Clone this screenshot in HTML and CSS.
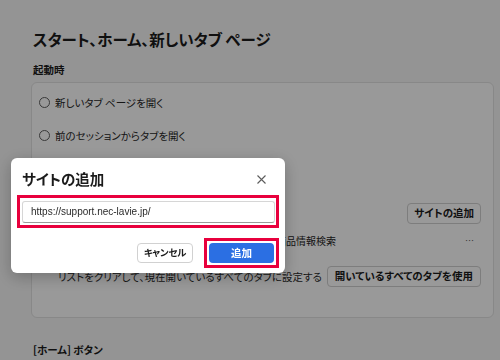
FILE: index.html
```html
<!DOCTYPE html>
<html lang="ja">
<head>
  <meta charset="UTF-8">
  <meta name="viewport" content="width=device-width, initial-scale=1">
  <title>設定 - スタート、ホーム、新しいタブ ページ</title>
  <link rel="stylesheet" href="styles.css">
</head>
<body>
  <main class="page">
    <h1>スタート、ホーム、新しいタブ ページ</h1>
    <h3 class="label">起動時</h3>

    <section class="card">
      <label class="radio-row"><span class="radio"></span>新しいタブ ページを開く</label>
      <label class="radio-row"><span class="radio"></span>前のセッションからタブを開く</label>
      <label class="radio-row"><span class="radio checked"></span></label>

      <div class="pages-head">
        <button class="btn">サイトの追加</button>
      </div>
      <div class="site-row">
        <span class="site-name">商品情報検索</span>
        <span class="more">…</span>
      </div>
      <div class="use-row">
        <span>リストをクリアして、現在開いているすべてのタブに設定する</span>
        <button class="btn">開いているすべてのタブを使用</button>
      </div>
    </section>

    <h3 class="label home">[ホーム] ボタン</h3>
  </main>

  <div class="overlay">
    <div class="dialog">
      <div class="dialog-head">
        <h2>サイトの追加</h2>
        <svg class="close" width="9" height="9" viewBox="0 0 9 9">
          <path d="M0.5 0.5 L8.5 8.5 M8.5 0.5 L0.5 8.5" stroke="#5c5c5c" stroke-width="1.1" fill="none"/>
        </svg>
      </div>
      <div class="mark mark-input">
        <div class="input">https://support.nec-lavie.jp/</div>
      </div>
      <div class="dialog-foot">
        <button class="btn cancel">キャンセル</button>
        <div class="mark">
          <button class="btn primary">追加</button>
        </div>
      </div>
    </div>
  </div>
</body>
</html>
```

FILE: styles.css
```css
body {
  margin: 0;
  background-color: #f7f7f7;
  font-family: "Noto Sans CJK JP", sans-serif;
  font-feature-settings: "palt";
  color: #1b1b1b;
  width: 500px;
  height: 360px;
  overflow: hidden;
}
.page {
  padding: 0 6px 0 31px;
}
h1 {
  margin: 27px 0 0 2px;
  font-size: 15.5px;
  line-height: 24px;
  font-weight: 700;
}
.label {
  margin: 11px 0 0 2px;
  font-size: 10.5px;
  line-height: 16px;
  font-weight: 700;
}
.card {
  margin-top: 4px;
  background-color: #fff;
  border: 1px solid #e3e3e3;
  border-radius: 6px;
  padding: 3px 12px 30px 7px;
}
.radio-row {
  display: flex;
  align-items: center;
  gap: 5px;
  height: 33px;
  font-size: 10.5px;
  color: #262626;
}
.radio {
  width: 11px;
  height: 11px;
  box-sizing: border-box;
  border: 1px solid #5f5f5f;
  border-radius: 50%;
}
.pages-head {
  display: flex;
  align-items: center;
  justify-content: flex-end;
  height: 30px;
  margin-top: 13px;
}
.btn {
  font-family: inherit;
  font-feature-settings: "palt";
  font-size: 10.5px;
  font-weight: 700;
  color: #1b1b1b;
  background-color: #fff;
  border: 1px solid #d1d1d1;
  border-radius: 4px;
  height: 21px;
  padding: 0 6px;
  line-height: 1;
}
.site-row {
  display: flex;
  align-items: center;
  justify-content: space-between;
  height: 24px;
  padding: 0 7px 0 19px;
  font-size: 10px;
  color: #262626;
}
.site-name {
  padding-left: 218px;
}
.more {
  color: #555;
  font-size: 9px;
}
.use-row {
  display: flex;
  align-items: flex-start;
  justify-content: space-between;
  margin-top: 14px;
  padding-left: 19px;
  font-size: 10.5px;
}
.use-row span {
  margin-top: 3px;
  color: #2a2a2a;
}
.use-row .btn {
  padding: 0 7px;
}
.home {
  margin-top: 24px;
}
.overlay {
  position: fixed;
  inset: 0;
  background-color: rgba(0, 0, 0, 0.4);
}
.dialog {
  position: absolute;
  left: 11px;
  top: 158px;
  width: 274px;
  box-sizing: border-box;
  background-color: #fff;
  border-radius: 6px;
  padding: 11px 6px 5px 6px;
  box-shadow: 0 4px 16px rgba(0, 0, 0, 0.25);
}
.dialog-head {
  display: flex;
  align-items: center;
  justify-content: space-between;
  height: 20px;
  padding: 0 13px 0 5px;
}
.dialog-head h2 {
  margin: 0;
  font-size: 14.5px;
  font-weight: 700;
  line-height: 20px;
}
.close {
  display: block;
}
.mark {
  border: 3px solid #e8003d;
  padding: 2px;
}
.mark-input {
  margin-top: 6px;
  padding: 3px 1px 2px 2px;
}
.input {
  height: 22px;
  box-sizing: border-box;
  border: 1px solid #d6d6d6;
  border-bottom-color: #9a9a9a;
  border-radius: 3px;
  padding-left: 8px;
  font-family: "Liberation Sans", Arial, sans-serif;
  font-size: 10px;
  line-height: 20px;
  color: #2b2b2b;
}
.dialog-foot {
  display: flex;
  align-items: center;
  justify-content: flex-end;
  gap: 11px;
  margin-top: 10px;
}
.cancel {
  width: 56px;
  height: 20px;
  padding: 0;
  font-size: 9.5px;
  letter-spacing: -0.3px;
}
.primary {
  display: block;
  width: 65px;
  height: 20px;
  padding: 0;
  border: none;
  background-color: #2b6fe3;
  color: #fff;
}
```
